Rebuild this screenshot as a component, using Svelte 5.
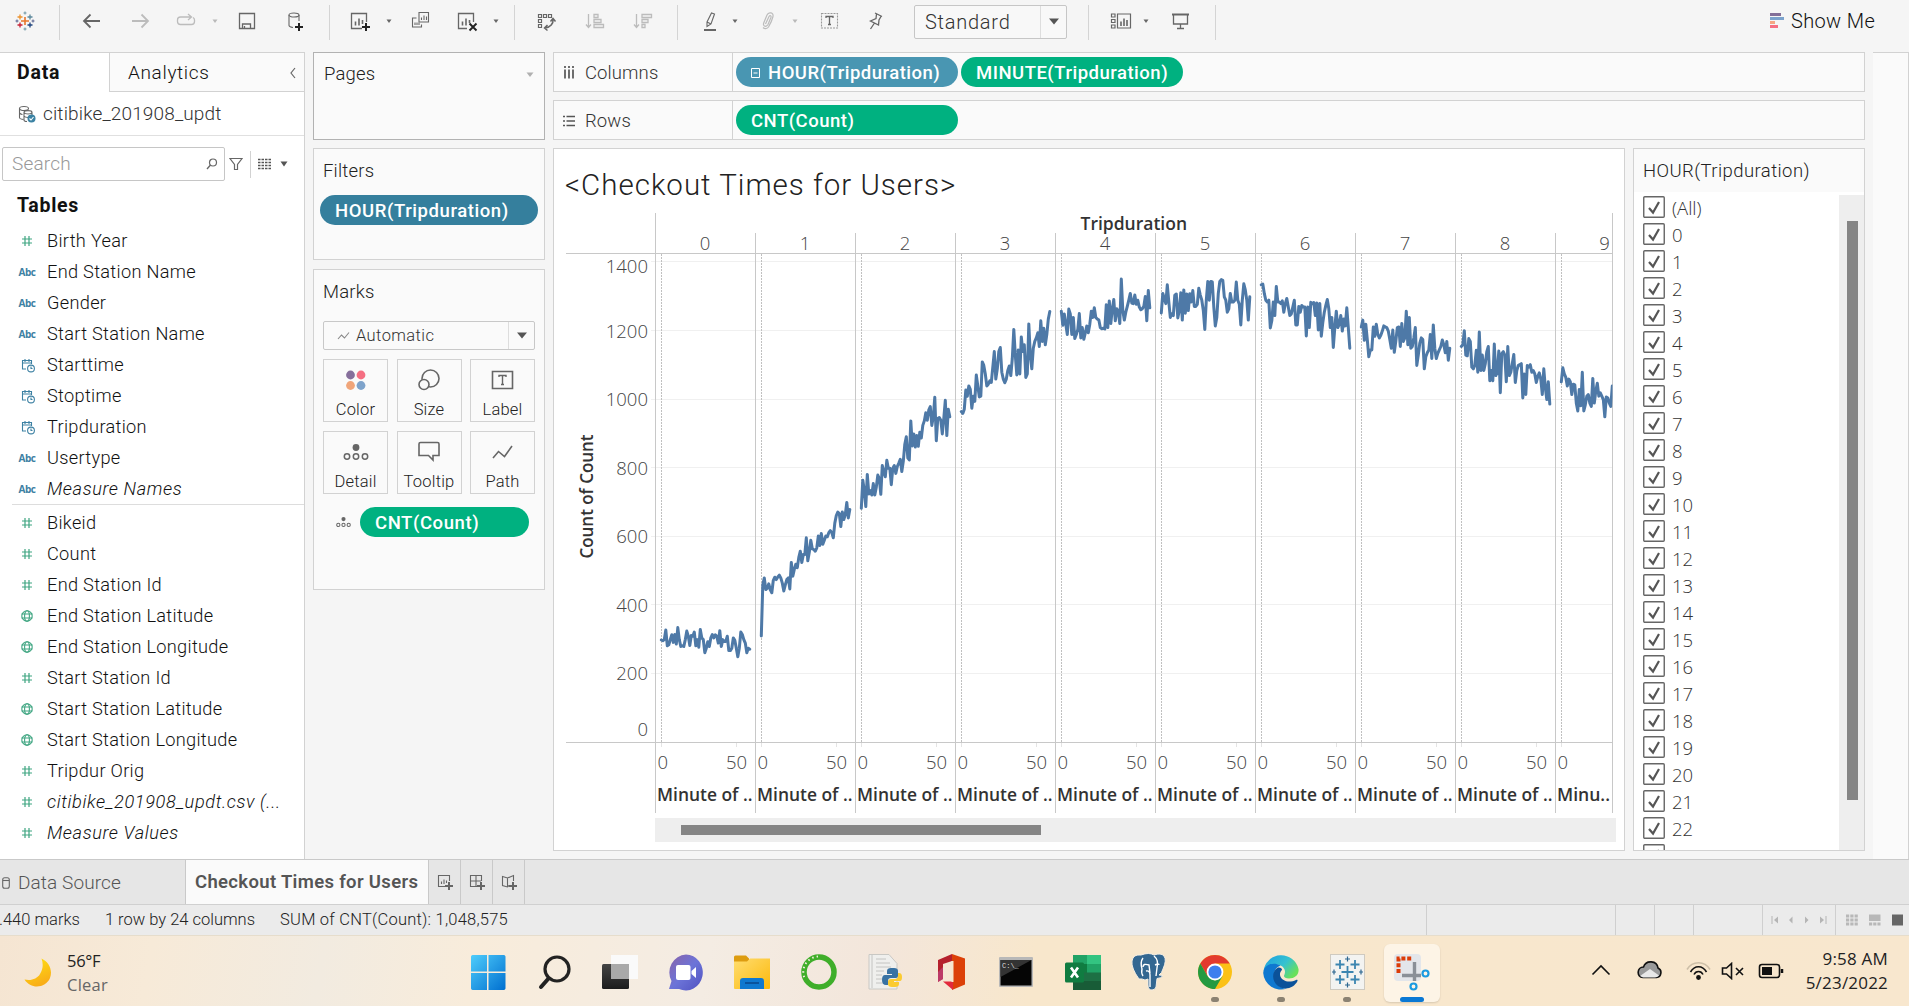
<script>
  const dimensions = [
    ['num', 'Birth Year'], ['abc', 'End Station Name'], ['abc', 'Gender'], ['abc', 'Start Station Name'],
    ['date', 'Starttime'], ['date', 'Stoptime'], ['date', 'Tripduration'], ['abc', 'Usertype'],
    ['abc', 'Measure Names', true],
  ];
  const measures = [
    ['num', 'Bikeid'], ['num', 'Count'], ['num', 'End Station Id'], ['geo', 'End Station Latitude'],
    ['geo', 'End Station Longitude'], ['num', 'Start Station Id'], ['geo', 'Start Station Latitude'],
    ['geo', 'Start Station Longitude'], ['num', 'Tripdur Orig'],
    ['num', 'citibike_201908_updt.csv (...', true], ['num', 'Measure Values', true],
  ];
  const toolbar = [
    'logo', '|', 'back', 'forward', 'replay', 'caretdim', 'save', 'newdata', '|', 'newsheet', 'caret', 'duplicate',
    'clear', 'caret', '|', 'swap', 'asc', 'desc', '|', 'pen', 'caret', 'clip', 'caretdim', 'text', 'pin', 'select',
    '|', 'cards', 'caret', 'present', '|', 'showme',
  ];
  const marks = ['Color', 'Size', 'Label', 'Detail', 'Tooltip', 'Path'];
  const hours = ['(All)', ...Array.from({ length: 23 }, (_, i) => String(i)), ''];
  const apps = ['start', 'search', 'taskview', 'chat', 'explorer', 'anaconda', 'pyfile', 'office', 'cmd', 'excel', 'postgres', 'chrome', 'edge', 'tableau', 'snip'];
  const running = ['chrome', 'edge', 'tableau'];

  // Checkouts per minute, one row for each hour pane
  const series = [
    [299,297,300,328,282,285,300,314,292,315,287,335,300,280,282,280,300,325,310,283,312,310,322,282,300,278,330,305,300,262,275,294,280,305,315,305,314,310,290,326,280,300,295,295,310,268,268,275,305,298,275,250,275,322,315,300,290,262,275,272],
    [311,460,480,446,450,463,445,437,473,482,475,483,488,480,465,442,460,475,480,448,525,485,505,520,510,540,558,525,548,548,597,530,555,590,565,563,558,568,602,575,610,578,590,602,600,612,618,612,597,640,662,672,668,630,672,650,665,700,655,680],
    [683,765,735,688,782,725,735,722,755,722,745,780,770,724,808,790,775,823,800,800,752,800,808,785,805,815,826,790,820,870,892,830,824,938,865,900,862,895,864,905,888,925,938,962,940,970,980,925,950,1007,880,945,948,940,900,945,998,895,972,950],
    [965,960,972,1028,1010,1040,1030,975,1010,995,1072,1040,1008,1010,1110,1100,1075,1040,1045,1055,1050,1095,1140,1060,1090,1140,1152,1080,1060,1049,1060,1085,1098,1070,1120,1205,1130,1072,1145,1075,1183,1140,1160,1065,1075,1221,1130,1090,1150,1170,1180,1195,1155,1230,1170,1208,1160,1190,1235,1257],
    [1258,1217,1250,1220,1190,1264,1250,1190,1240,1178,1190,1205,1251,1180,1210,1176,1195,1215,1195,1220,1258,1240,1268,1240,1235,1233,1210,1207,1208,1206,1277,1210,1288,1222,1265,1292,1230,1265,1258,1222,1352,1260,1232,1255,1272,1290,1310,1282,1280,1305,1278,1290,1270,1262,1265,1272,1301,1230,1318,1268],
    [1253,1310,1295,1280,1335,1285,1240,1250,1245,1305,1308,1238,1260,1312,1232,1320,1252,1308,1260,1309,1285,1318,1272,1272,1278,1325,1305,1290,1260,1205,1290,1345,1290,1345,1343,1270,1215,1240,1310,1345,1350,1348,1300,1290,1255,1265,1310,1285,1285,1290,1343,1290,1278,1218,1290,1338,1320,1290,1232,1300],
    [1335,1337,1310,1290,1285,1290,1209,1230,1285,1245,1330,1285,1285,1280,1288,1255,1280,1295,1270,1245,1250,1270,1290,1218,1218,1272,1255,1275,1270,1270,1186,1270,1210,1284,1280,1283,1245,1282,1203,1280,1185,1225,1255,1275,1292,1265,1210,1240,1152,1210,1258,1210,1220,1245,1200,1235,1215,1268,1210,1150],
    [1212,1232,1173,1220,1175,1125,1145,1145,1212,1185,1220,1190,1180,1188,1200,1215,1212,1210,1200,1175,1150,1203,1138,1170,1210,1212,1155,1222,1170,1180,1258,1160,1240,1150,1155,1180,1210,1100,1130,1165,1180,1175,1090,1125,1137,1145,1190,1120,1218,1150,1120,1135,1145,1155,1174,1160,1137,1170,1115,1150],
    [1155,1160,1201,1130,1128,1178,1170,1095,1090,1100,1144,1080,1197,1085,1130,1085,1105,1140,1155,1055,1085,1055,1162,1070,1080,1142,1020,1135,1140,1130,1052,1155,1070,1080,1105,1132,1050,1085,1100,1102,1105,1005,1075,1015,1100,1095,1102,1080,1085,1075,1050,1068,1078,1060,1015,1090,1035,1000,1052,987],
    [1052,1093,1075,1065,1040,1060,1052,1015,1045,1043,990,967,1030,982,1080,967,985,1010,1015,990,980,1062,990,1025,1048,1010,1020,1010,1000,950,1008,1005,990,980,1040],
  ];
  const Y = (v) => 742.5 - v * 0.34286;
  const points = (row, h) => row.map((v, m) => `${(661.3 + h * 100 + m * 1.5).toFixed(1)},${Y(v).toFixed(1)}`).join(' ');
  const ticks = [1400, 1200, 1000, 800, 600, 400, 200, 0];
  const labelY = (t) => (t === 1400 ? 273 : t === 0 ? 735.5 : Y(t) + 6.5);
</script>

{#snippet icon(n)}
  {#if n === 'logo'}
    <svg width="20" height="22" viewBox="0 0 20 22" class="ln">
      <path d="M10 7v8M6 11h8" stroke="#e8762b" stroke-width="1.6" />
      <path d="M5 4.500v5M2.500 7h5" stroke="#eb912b" stroke-width="1.300" /><path d="M15 4.500v5M12.500 7h5" stroke="#5b879b" stroke-width="1.300" />
      <path d="M5 12.500v5M2.500 15h5" stroke="#c72035" stroke-width="1.300" /><path d="M15 12.500v5M12.500 15h5" stroke="#1f447e" stroke-width="1.300" />
      <path d="M10 1.500v3M8.500 3h3M10 17.500v3M8.500 19h3" stroke="#7199a6" /><path d="M2 9.500v3M.5 11h3M18 9.500v3M16.500 11h3" stroke="#5c6692" />
    </svg>
  {:else if n === 'back'}
    <svg width="20" height="22" viewBox="0 0 20 22" class="ln"><path d="M2 11h16M8.500 4.500L2 11l6.500 6.500" stroke-width="1.800" /></svg>
  {:else if n === 'forward'}
    <svg width="20" height="22" viewBox="0 0 20 22" class="ln dim"><path d="M2 11h16M11.500 4.500L18 11l-6.500 6.500" stroke-width="1.800" /></svg>
  {:else if n === 'replay'}
    <svg width="20" height="22" viewBox="0 0 20 22" class="ln dim"><path d="M5 7h-.5a3 3 0 0 0-3 3v1.500a3 3 0 0 0 3 3h11a3 3 0 0 0 3-3V10a3 3 0 0 0-1.500-2.500M4.500 7H15M12 4l3.500 3L12 10" stroke-width="1.300" /></svg>
  {:else if n === 'caret'}
    <svg width="8" height="22" viewBox="0 0 8 22"><path d="M1.500 9.500h5L4 13z" fill="#666" /></svg>
  {:else if n === 'caretdim'}
    <svg width="8" height="22" viewBox="0 0 8 22"><path d="M1.500 9.500h5L4 13z" fill="#b9b9b9" /></svg>
  {:else if n === 'save'}
    <svg width="20" height="22" viewBox="0 0 20 22" class="ln"><path d="M1.500 3.500h15v15h-15zM4.500 18.500v-4.500h8v4.500M6.500 16v2.500" stroke-width="1.300" /></svg>
  {:else if n === 'newdata'}
    <svg width="20" height="22" viewBox="0 0 20 22" class="ln"><ellipse cx="7" cy="5" rx="5" ry="2" /><path d="M2 5v10.500c0 1 2 1.700 4 2M12 5v6" /><path d="M12 13v8M8 17h8" stroke="#222" stroke-width="2" /></svg>
  {:else if n === 'newsheet'}
    <svg width="22" height="22" viewBox="0 0 22 22" class="ln"><path d="M12 18.500H1.500v-15h15V12" stroke-width="1.300" /><path d="M5.500 11.500v4M9 8.500v7M12.500 10v4" stroke-width="1.600" /><path d="M16 13v8M12 17h8" stroke="#222" stroke-width="2" /></svg>
  {:else if n === 'duplicate'}
    <svg width="20" height="22" viewBox="0 0 20 22" class="ln"><path d="M8 2.500h9.500v9.500H8zM5.500 8H1.500v9h9V14.500" /><path d="M10.500 7.500v2.500M13 5.500v4.500M15.500 6.500v3.500M4 12.500v2.500M6 12.500v2.500M8 12.500v2.500" /></svg>
  {:else if n === 'clear'}
    <svg width="22" height="22" viewBox="0 0 22 22" class="ln"><path d="M10 18.500H1.500v-15h15V12" stroke-width="1.300" /><path d="M5.500 11.500v4M9 8.500v7M12.500 10v3" stroke-width="1.600" /><path d="M12.500 13.500l7 7M19.500 13.500l-7 7" stroke="#222" stroke-width="1.900" /></svg>
  {:else if n === 'swap'}
    <svg width="20" height="22" viewBox="0 0 20 22" class="ln"><path d="M1.500 4.500h3v3h-3zM6.500 4.500h3v3h-3zM11.500 4.500h3v3h-3zM1.500 9.500h3v3h-3zM1.500 14.500h3v3h-3z" stroke-width="1.200" /><path d="M16 9.500c.5 4-2.500 8-8 8.500M13.500 11.500l2.500-3 2.500 3M10.500 15l-3 3 3 2.500" stroke-width="1.500" /></svg>
  {:else if n === 'asc'}
    <svg width="20" height="22" viewBox="0 0 20 22" class="ln dim"><path d="M3.500 4v13M1 14.500l2.500 3 2.500-3M9 4.500h4v3H9zM9 9.500h7v3H9zM9 14.500h9.500v3H9z" stroke-width="1.300" /></svg>
  {:else if n === 'desc'}
    <svg width="20" height="22" viewBox="0 0 20 22" class="ln dim"><path d="M3.500 4v13M1 14.500l2.500 3 2.500-3M9 4.500h9.500v3H9zM9 9.500h6v3H9zM9 14.500h3v3H9z" stroke-width="1.300" /></svg>
  {:else if n === 'pen'}
    <svg width="16" height="22" viewBox="0 0 16 22" class="ln"><path d="M5 12L9.500 3l3 1L9 14l-4 2.500zM5 12l4 2" /><path d="M2 20h12" stroke-width="2" /></svg>
  {:else if n === 'clip'}
    <svg width="16" height="22" viewBox="0 0 16 22" class="ln dim"><path d="M5.500 14L9 6.500c1-1.500 2.500-.8 2 .8L8 14.500c-1.500 3-5.500 2-4.300-1.500L7 5c1.500-3.500 7-2.500 6 1.500-.5 2-3 8-4.500 10.500-1.500 2-4 2-5.500.5" stroke-width="1.200" /></svg>
  {:else if n === 'text'}
    <svg width="20" height="22" viewBox="0 0 20 22" class="ln"><path d="M1.500 3.500h16v14.500h-16z" stroke-dasharray="2 1" stroke="#999" /><path d="M6 8V6.500h7V8M9.500 6.500v8M8 14.500h3" stroke-width="1.300" /></svg>
  {:else if n === 'pin'}
    <svg width="16" height="22" viewBox="0 0 16 22" class="ln"><path d="M7 3l7 3.500M8.500 4L8 8.500 2.500 11l8 4 .5-5L13 6.500M6.500 13l-4 6" stroke-width="1.300" /></svg>
  {:else if n === 'select'}
    <div class="select"><span>Standard</span><i><svg width="10" height="7" viewBox="0 0 10 7"><path d="M0 .5h10L5 6.500z" fill="#555" /></svg></i></div>
  {:else if n === 'cards'}
    <svg width="22" height="22" viewBox="0 0 22 22" class="ln"><path d="M7.500 4h13v14h-13zM1.500 4H5v3H1.500zM1.500 9.500H5v3H1.500zM1.500 15H5v3H1.500z" stroke-width="1.200" /><path d="M11 11.500V16M14 8.500V16M17 10V16" stroke-width="1.600" /></svg>
  {:else if n === 'present'}
    <svg width="20" height="22" viewBox="0 0 20 22" class="ln"><path d="M1 4.500h17" stroke-width="2" /><path d="M2.500 5v9h14V5M9.500 14v4.500M6 18.500h7" stroke-width="1.300" /></svg>
  {:else if n === 'showme'}
    <div class="showme"><svg width="14" height="16" viewBox="0 0 14 16"><path d="M0 0h11v3H0z" fill="#836f98" /><path d="M0 4h14v3H0z" fill="#7ba2cc" /><path d="M0 8h5v3H0z" fill="#f5a684" /><path d="M0 12h8v3H0z" fill="#f56f82" /></svg><span>Show Me</span></div>
  {:else if n === 'num'}
    <svg width="16" height="14" viewBox="0 0 16 14" class="ln green"><path d="M6 2v10M10 2v10M3 5h10M3 9h10" stroke-width="1.200" /></svg>
  {:else if n === 'abc'}
    <b class="abc">Abc</b>
  {:else if n === 'date'}
    <svg width="16" height="16" viewBox="0 0 16 16" class="ln blue"><path d="M7 12H3.500V3.500h9V7M3.500 6h9M6 2v3M10 2v3" /><circle cx="12" cy="11.500" r="3.400" /><path d="M12 9.500v2h1.500" /></svg>
  {:else if n === 'geo'}
    <svg width="16" height="14" viewBox="0 0 16 14" class="ln green"><circle cx="8" cy="7" r="5.200" /><ellipse cx="8" cy="7" rx="2.400" ry="5.200" /><path d="M2.500 5h11M2.500 9h11" /></svg>
  {:else if n === 'Color'}
    <svg width="24" height="22" viewBox="0 0 24 22"><circle cx="6.500" cy="6" r="4.400" fill="#866f9b" /><circle cx="17" cy="6" r="4.400" fill="#f56f82" /><circle cx="6.500" cy="16.500" r="4.400" fill="#f0a57a" /><circle cx="17" cy="16.500" r="4.400" fill="#7ea3cb" /></svg>
  {:else if n === 'Size'}
    <svg width="24" height="22" viewBox="0 0 24 22" class="ln"><circle cx="13.500" cy="9.500" r="8.500" stroke-width="1.600" /><circle cx="7" cy="15.500" r="5" fill="#fafafa" stroke-width="1.600" /></svg>
  {:else if n === 'Label'}
    <svg width="24" height="22" viewBox="0 0 24 22" class="ln"><path d="M1.500 2.500h20v17h-20z" stroke-width="1.600" /><path d="M8 8V6.500h7V8M11.500 6.500v9M10 15.500h3" stroke-width="1.400" /></svg>
  {:else if n === 'Detail'}
    <svg width="26" height="22" viewBox="0 0 26 22" class="ln"><circle cx="13" cy="6.500" r="3.400" fill="#666" stroke="none" /><circle cx="4" cy="15.500" r="2.700" stroke-width="1.500" /><circle cx="13" cy="15.500" r="2.700" stroke-width="1.500" /><circle cx="22" cy="15.500" r="2.700" stroke-width="1.500" /></svg>
  {:else if n === 'Tooltip'}
    <svg width="24" height="22" viewBox="0 0 24 22" class="ln"><path d="M3.500 1.500h17a1.500 1.500 0 0 1 1.500 1.500v11.500h-6v4.500l-4.500-4.500H2V3a1.500 1.500 0 0 1 1.500-1.500z" stroke-width="1.600" /></svg>
  {:else if n === 'Path'}
    <svg width="24" height="22" viewBox="0 0 24 22" class="ln"><path d="M2 17L7.500 10.500l6 5L21 5" stroke-width="1.600" /></svg>
  {/if}
{/snippet}

{#snippet app(n)}
  <svg width="38" height="38" viewBox="0 0 38 38">
    {#if n === 'start'}
      <path d="M2 3.500a2 2 0 0 1 1.500-1.500H18v16.500H2zM19.500 2H35a2 2 0 0 1 1.500 1.500v15h-17zM2 20h16v17H3.500A2 2 0 0 1 2 35.500zM19.500 20h17v15.500A2 2 0 0 1 35 37H19.500z" fill="url(#win)" />
    {:else if n === 'search'}
      <circle cx="22" cy="16" r="12" fill="none" stroke="#222" stroke-width="3.200" /><path d="M13.500 25.500L6 34" stroke="#222" stroke-width="4" stroke-linecap="round" />
    {:else if n === 'taskview'}
      <rect x="1" y="11" width="27" height="25" rx="1.500" fill="url(#dark)" /><path d="M10 11h18v15H10z" fill="#a9a9a9" /><path d="M28 2h9v24h-9zM10 2h18v9H10z" fill="#fafafa" />
    {:else if n === 'chat'}
      <path d="M19 1.500a17 18 0 1 1-7 34.500H2l2.500-8A18 18 0 0 1 19 1.500z" fill="url(#chat)" /><rect x="9" y="12" width="14.500" height="15" rx="2" fill="#fff" /><path d="M24.500 18l4.500-4v11l-4.500-4z" fill="#fff" />
    {:else if n === 'explorer'}
      <path d="M1 4a1.500 1.500 0 0 1 1.500-1.500H13L16 5.500V12H1z" fill="#dd9c10" /><path d="M1 8.500h13l3-3h20V35a1 1 0 0 1-1 1H2a1 1 0 0 1-1-1z" fill="url(#folder)" /><path d="M7 36V28a3 3 0 0 1 3-3h18a3 3 0 0 1 3 3v8z" fill="#0f78cf" /><path d="M12 30h14" stroke="#0a539c" stroke-width="2" />
    {:else if n === 'anaconda'}
      <circle cx="19" cy="19" r="15" fill="none" stroke="#3fae2a" stroke-width="5.500" /><path d="M18 3.500A15.500 15.500 0 0 0 4.500 25" fill="none" stroke="#f4ecdf" stroke-width="2" stroke-dasharray="1.500 3" />
    {:else if n === 'pyfile'}
      <path d="M3 1.500h20l8 9V36H3z" fill="#efefed" stroke="#c9c8c4" /><path d="M6 2v33M10 6h10M10 10h14M10 14h15M10 18h8M10 22h6M10 26h7M10 30h8" stroke="#c4c4c2" /><path d="M25 15q-4 0-4 3v3h5v1h-7q-3 0-3 5t4 5h2v-4q0-3 3-3h5q2 0 2-2v-5q0-3-4-3z" fill="#3872a3" /><path d="M29 34q4 0 4-3v-2h-5v-1h6q2 0 2-4t-3-4h-1v3q0 3-3 3h-4q-3 0-3 3v2q0 3 4 3z" fill="#fbcb31" />
    {:else if n === 'office'}
      <path d="M20 1L6 7v22l5-3V11l9-3z" fill="#b5202c" /><path d="M6 29l5-3V14l-5 5z" fill="#c24c90" opacity=".6" /><path d="M20 1l13 4.500v26L20 37z" fill="#dc4008" /><path d="M11 28.500h10V37z" fill="#e22a3c" /><path d="M20.500 8v21" stroke="#f7e6cd" stroke-width="2" />
    {:else if n === 'cmd'}
      <rect x="1" y="4" width="34" height="30" rx="1" fill="#b8b8b8" /><rect x="2.500" y="7" width="31" height="25.500" fill="#050505" /><path d="M2.500 7h31L2.500 24z" fill="#333" /><text x="4" y="15" font-size="7" fill="#ddd" font-family="Liberation Mono, monospace">C:\_</text>
    {:else if n === 'excel'}
      <rect x="9" y="2" width="28" height="35" rx="1.500" fill="#1d7044" /><path d="M9 2h14v9H9z" fill="#21a366" /><path d="M23 2h14v9H23z" fill="#33c481" /><path d="M9 11h14v8.500H9z" fill="#107c41" /><path d="M23 11h14v8.500H23z" fill="#21a366" /><path d="M9 28h28v9H9z" fill="#185c37" /><rect x="1" y="9.500" width="19" height="20" rx="1.500" fill="#107c41" /><path d="M7 14.500l7 10M14 14.500l-7 10" stroke="#fff" stroke-width="2.600" />
    {:else if n === 'postgres'}
      <path d="M11 2q8-3 13 0 7-2.500 10 1 3 4-1 13-1 4-4 6l4 .5q-2 3-6 3L26 34q-1 3-4 3-4 0-4-5v-6q-3 2-6 0l-3 0Q1 15 2 8q1-7 9-6z" fill="#336791" stroke="#f4eee4" /><path d="M24 3q5 4 3 12l-1 8M13 5q-3 4-1 11-1 4 1 7M16 18q4-1 4 4v12M13 14q0-4 6-2l1 8M25 12q4-2 4 0" fill="none" stroke="#fff" stroke-width="1.400" />
    {:else if n === 'chrome'}
      <circle cx="19" cy="19" r="17" fill="#fbc116" /><path d="M4.300 10.500A17 17 0 0 1 33.700 10.500H19L11.600 23.300z" fill="#e33b2e" /><path d="M4.300 10.500A17 17 0 0 0 19 36l7.400-12.700-7.400 4.200-7.400-4.200z" fill="#249a41" /><circle cx="19" cy="19" r="8.400" fill="#fff" /><circle cx="19" cy="19" r="6.600" fill="#3d7fee" />
    {:else if n === 'edge'}
      <path d="M1.500 18A17.800 17.800 0 0 1 36.500 16c.8 6-4 9.500-9.500 9.500-4 0-6-1.500-4.500-4C25 15 18 10 11 12c-5 1.500-8 4-9.500 6z" fill="url(#edge)" /><path d="M1.200 20C2 11 12 8.500 18.500 12.500c-6 2-8 9-5 15C16 33 20 36 25 35.500A17.800 17.800 0 0 1 1.200 20z" fill="#0f78d0" /><path d="M16 14.500c-7 4-6 14 0 18.500 7 5 16 2 19.500-5 .3-1-.5-1.500-1.500-1-7 3.500-15 1-16-5-.3-2.500 1-4 2-5 .5-1.500-2-3-4-2.500z" fill="#0b529a" />
    {:else if n === 'tableau'}
      <rect x="2.500" y="1.500" width="34" height="35" fill="#f3f3f1" stroke="#cfcac0" /><path d="M19.500 13v12M13.500 19h12M12 7v9M7.500 11.500h9M27 7v9M22.500 11.500h9M12 22v9M7.500 26.500h9M27 22v9M22.500 26.500h9" stroke="#3c85b0" stroke-width="1.800" /><path d="M19.500 3.500v5M17 6h5M19.500 29.500v5M17 32h5M6 16.500v5M4 19h4M33 16.500v5M31 19h4" stroke="#2c6690" stroke-width="1.200" />
    {:else if n === 'snip'}
      <rect x="1" y="1" width="27" height="27" rx="4" fill="#e3e6ea" /><path d="M5.500 20V5.500H20" stroke="#dc3b06" stroke-width="4" fill="none" stroke-dasharray="4 1.800" /><path d="M9 22.500h19M21.500 9v19" stroke="#8a9097" stroke-width="3.400" fill="none" /><circle cx="32.500" cy="20.500" r="3" fill="none" stroke="#1c9be0" stroke-width="2.200" /><circle cx="20.500" cy="33.500" r="3" fill="none" stroke="#1c9be0" stroke-width="2.200" />
    {/if}
  </svg>
{/snippet}

<svg width="0" height="0" class="defs" aria-hidden="true">
  <defs>
    <linearGradient id="win" x1="0" y1="0" x2="1" y2="1"><stop offset="0" stop-color="#4fcdfb" /><stop offset="1" stop-color="#006fd0" /></linearGradient>
    <linearGradient id="dark" x1="0" y1="0" x2="0" y2="1"><stop offset="0" stop-color="#444" /><stop offset="1" stop-color="#1c1c1c" /></linearGradient>
    <linearGradient id="chat" x1="0" y1="0" x2="1" y2="1"><stop offset="0" stop-color="#8a62a8" /><stop offset=".5" stop-color="#6c74d8" /><stop offset="1" stop-color="#5051c0" /></linearGradient>
    <linearGradient id="folder" x1="0" y1="0" x2="1" y2="1"><stop offset="0" stop-color="#ffdd70" /><stop offset="1" stop-color="#fcb90c" /></linearGradient>
    <linearGradient id="edge" x1="0" y1="0" x2="1" y2=".6"><stop offset="0" stop-color="#1b9de2" /><stop offset=".6" stop-color="#36c2d0" /><stop offset="1" stop-color="#69e05a" /></linearGradient>
    <linearGradient id="moon" x1="0" y1="0" x2=".4" y2="1"><stop offset="0" stop-color="#ffe411" /><stop offset="1" stop-color="#f9ae18" /></linearGradient>
  </defs>
</svg>

<div class="screen">
  <header class="toolbar">
    {#each toolbar as t}
      {#if t === '|'}<span class="rule"></span>{:else}<span class="tool">{@render icon(t)}</span>{/if}
    {/each}
  </header>

  <main>
    <aside class="data">
      <div class="tabs">
        <strong>Data</strong>
        <div class="analytics"><span>Analytics</span><svg width="8" height="14" viewBox="0 0 8 14" class="ln"><path d="M6 2L2 7l4 5" stroke-width="1.200" /></svg></div>
      </div>
      <div class="source">
        <svg width="18" height="18" viewBox="0 0 18 18" class="ln"><ellipse cx="6" cy="3.500" rx="4.500" ry="2" /><path d="M1.500 3.500v9c0 1 2 2 4 2M1.500 8c1 1 2 1.500 3 1.500" /><path d="M6 7.500c0-2.500 8-2.500 8 0v3M6 7.500v7.500c0 1 2 1.500 3 1.500M6 7.500c1 2 7 2 8 0M6 11c1 1.500 3 1.500 4 1.500" /><circle cx="13.500" cy="13.500" r="4" fill="#3b82a3" stroke="none" /><path d="M11.500 13.500l1.500 1.500 2.500-3" stroke="#fff" /></svg>
        <span>citibike_201908_updt</span>
      </div>
      <div class="find">
        <div class="search"><span>Search</span><svg width="12" height="12" viewBox="0 0 12 12" class="ln"><circle cx="7" cy="4.500" r="3.500" stroke-width="1.200" /><path d="M4.500 7L1 11" stroke-width="1.400" /></svg></div>
        <svg width="14" height="14" viewBox="0 0 14 14" class="ln"><path d="M1 1.500h12L8.500 7.500v5h-3v-5z" stroke-width="1.200" /></svg>
        <span class="bar"></span>
        <svg width="13" height="12" viewBox="0 0 13 12"><path d="M0 1.500h13M0 4.500h13M0 7.500h13M0 10.500h13" stroke="#555" stroke-width="1.500" stroke-dasharray="2.500 1" /></svg>
        <svg class="dd" width="8" height="6" viewBox="0 0 8 6"><path d="M.5 .5h7L4 5.500z" fill="#555" /></svg>
      </div>
      <h2>Tables</h2>
      <ul>
        {#each dimensions as [t, name, it]}<li><span class="ty">{@render icon(t)}</span><span class:it>{name}</span></li>{/each}
      </ul>
      <ul class="measures">
        {#each measures as [t, name, it]}<li><span class="ty">{@render icon(t)}</span><span class:it>{name}</span></li>{/each}
      </ul>
    </aside>

    <section class="shelves">
      <div class="card pages"><h3>Pages</h3><svg width="8" height="6" viewBox="0 0 8 6"><path d="M.5 .5h7L4 5z" fill="#b0b0b0" /></svg></div>
      <div class="card filters"><h3>Filters</h3><div class="pill deep">HOUR(Tripduration)</div></div>
      <div class="card marks">
        <h3>Marks</h3>
        <div class="auto"><svg width="14" height="10" viewBox="0 0 14 10" class="ln"><path d="M1 8l3.500-4 3 3L12 1.500" stroke="#888" /></svg><span>Automatic</span><i><svg width="10" height="7" viewBox="0 0 10 7"><path d="M0 .5h10L5 6.500z" fill="#555" /></svg></i></div>
        <div class="tiles">
          {#each marks as m}<div class="tile">{@render icon(m)}<span>{m}</span></div>{/each}
        </div>
        <div class="enc"><svg width="15" height="12" viewBox="0 0 26 20" class="ln"><circle cx="13" cy="5" r="3.600" fill="#666" stroke="none" /><circle cx="4" cy="15" r="2.800" stroke-width="1.800" /><circle cx="13" cy="15" r="2.800" stroke-width="1.800" /><circle cx="22" cy="15" r="2.800" stroke-width="1.800" /></svg><div class="pill green-p">CNT(Count)</div></div>
      </div>
    </section>

    <section class="work">
      <div class="shelf">
        <div class="name"><svg width="12" height="13" viewBox="0 0 12 13"><path d="M2 0v2M2 3.500V12.500M6 0v2M6 3.500V12.500M10 0v2M10 3.500V12.500" stroke="#555" stroke-width="1.700" /></svg><span>Columns</span></div>
        <div class="pill hour"><svg width="9" height="10" viewBox="0 0 9 10"><path d="M.5 .5h8v9h-8zM2.500 5h4" fill="none" stroke="#fff" /></svg>HOUR(Tripduration)</div>
        <div class="pill green-p">MINUTE(Tripduration)</div>
      </div>
      <div class="shelf">
        <div class="name"><svg width="12" height="12" viewBox="0 0 12 12"><path d="M0 1.500h2M3.500 1.500H12M0 6h2M3.500 6H12M0 10.500h2M3.500 10.500H12" stroke="#555" stroke-width="1.700" /></svg><span>Rows</span></div>
        <div class="pill green-p">CNT(Count)</div>
      </div>
      <div class="lower">
        <div class="view">
          <h1>&lt;Checkout Times for Users&gt;</h1>
          <svg class="chart" width="1058" height="602" viewBox="558 212 1058 602">
            <defs><clipPath id="pane"><rect x="655" y="212" width="957.500" height="602" /></clipPath></defs>
            {#each ticks as t}
              {#if t}<path d="M651 {Math.round(Y(t)) - 0.5}H1612" stroke="#f0f0f0" />{/if}
              <text class="num" x="648" y={labelY(t)} text-anchor="end">{t}</text>
            {/each}
            <path d="M566 253.500H1612M566 742.500H1612M655.500 213V813M1612.500 213V813" stroke="#c8c8c8" />
            <text class="strong" x="1080.500" y="229.500" textLength="106.500" lengthAdjust="spacingAndGlyphs">Tripduration</text>
            <text class="strong" transform="translate(592.500 558.500) rotate(-90)" textLength="124" lengthAdjust="spacingAndGlyphs">Count of Count</text>
            {#each series as row, h}
              {@const x = 655.5 + h * 100}
              {#if h}<path d="M{x} 233V813" stroke="#c8c8c8" />{/if}
              <path d="M{x + 6} 254V742" stroke="#c0c0c0" stroke-dasharray="2 1" />
              <path d="M{x + 6} 743V747" stroke="#e4e4e4" />
              <text class="num" x={h === 9 ? 1604.5 : x + 49.5} y="250" text-anchor="middle">{h}</text>
              <text class="num" x={x + 2} y="768.500">0</text>
              {#if h < 9}
                <path d="M{x + 81} 743V747" stroke="#e4e4e4" />
                <text class="num" x={x + 91.5} y="768.500" text-anchor="end">50</text>
                <text class="strong" x={x + 1.5} y="800.500" textLength="95.500" lengthAdjust="spacingAndGlyphs">Minute of ..</text>
              {:else}
                <text class="strong" x={x + 1.5} y="800.500" textLength="53" lengthAdjust="spacingAndGlyphs">Minu..</text>
              {/if}
              <polyline points={points(row, h)} clip-path="url(#pane)" />
            {/each}
          </svg>
          <div class="hscroll"><i></i></div>
        </div>
        <div class="quick">
          <h3>HOUR(Tripduration)</h3>
          <div class="body">
            <div class="opts">
              {#each hours as h}
                <label><svg width="22" height="22" viewBox="0 0 22 22"><rect x=".75" y=".75" width="20.500" height="20.500" rx="1" fill="#fff" stroke="#666" stroke-width="1.400" /><path d="M6 12l4 4.500L16 6" fill="none" stroke="#555" stroke-width="2.200" /></svg><span>{h}</span></label>
              {/each}
            </div>
            <div class="vscroll"><i></i></div>
          </div>
        </div>
      </div>
    </section>
    <div class="edgepane"></div>
  </main>

  <nav class="sheets">
    <div class="ds"><svg width="8" height="12" viewBox="0 0 8 12" class="ln"><rect x=".7" y=".7" width="6.600" height="10.500" rx="2" /><path d="M1 3.500h6" /></svg><span>Data Source</span></div>
    <div class="active">Checkout Times for Users</div>
    <div class="new"><svg width="17" height="17" viewBox="0 0 17 17" class="ln"><path d="M8 12.500H1.500v-11h11V7" /><path d="M4.500 7.500v2.500M7 5.500V10M9.500 6.500V9" /><path d="M12 8v8M8 12h8" stroke-width="2" /></svg></div>
    <div class="new"><svg width="17" height="17" viewBox="0 0 17 17" class="ln"><path d="M8 12.500H1.500v-11h11V7M1.500 7H12M7 1.500v11" /><path d="M12 8v8M8 12h8" stroke-width="2" /></svg></div>
    <div class="new"><svg width="17" height="17" viewBox="0 0 17 17" class="ln"><path d="M8 11.500L6.500 13 1.500 11.500v-9L6.500 4 12.500 1.500V7M6.500 4v9" /><path d="M12 8v8M8 12h8" stroke-width="2" /></svg></div>
  </nav>

  <div class="status">
    <div class="facts"><span>.440 marks</span><span>1 row by 24 columns</span><span class="sum">SUM of CNT(Count): 1,048,575</span></div>
    <i class="s1"></i><i class="s2"></i><i class="s2"></i><i class="s3"></i>
    <div class="pager"><svg width="56" height="10" viewBox="0 0 56 10"><path d="M1 1v8M55 1v8" stroke="#b5b5b5" /><path d="M7 1.500v7L3 5zM21.500 1.500v7L18 5zM34 1.500v7L37.500 5zM49 1.500v7L53 5z" fill="#b5b5b5" /></svg></div>
    <div class="modes"><svg width="57" height="12" viewBox="0 0 57 12"><path d="M0 2h12M0 6h12M0 10h12" stroke="#b8b8b8" stroke-width="3" stroke-dasharray="3.200 1.100" /><path d="M23 .5h11.500V7H23z" fill="#b8b8b8" /><path d="M23 10h11.500" stroke="#b8b8b8" stroke-width="3" stroke-dasharray="3.200 1" /><path d="M46 .5h11v11H46z" fill="#666" /></svg></div>
  </div>

  <footer>
    <div class="weather">
      <svg width="30" height="32" viewBox="0 0 30 32"><path d="M18.500 1.500C26 5 30 13 27 21 23 31 8 33 1.500 22.500 8 24 14 22 17 17c3-5 3.500-10 1.500-15.500z" fill="url(#moon)" /></svg>
      <div><span>56°F</span><small>Clear</small></div>
    </div>
    <div class="apps">
      {#each apps as a}<div class="app" class:cur={a === 'snip'}>{@render app(a)}{#if running.includes(a)}<i></i>{/if}{#if a === 'snip'}<i class="on"></i>{/if}</div>{/each}
    </div>
    <div class="tray">
      <svg width="20" height="12" viewBox="0 0 20 12" class="tr"><path d="M1.500 10.500L10 2l8.500 8.500" /></svg>
      <svg width="26" height="18" viewBox="0 0 26 18" class="tr"><path d="M6 16.500h13.500a5 5 0 0 0 1.500-9.500C20 -.5 9-1.500 6.500 6 0 6-1 16 6 16.500z" fill="#999" /><path d="M3 15l10-7 9 6.500q-2 2-4 2H6z" fill="#e8e8e8" stroke="none" /></svg>
      <svg width="25" height="20" viewBox="0 0 25 20" class="tr"><path d="M1 8.500C6.500-.5 18.500-.5 24 8.500" stroke="#cdbfa8" /><path d="M4.500 11C8.500 4 16.500 4 20.500 11M8 13.500c2-4 7-4 9 0" /><circle cx="12.500" cy="16.500" r="1.600" fill="#111" /></svg>
      <svg width="24" height="18" viewBox="0 0 24 18" class="tr"><path d="M1.500 6h4l5-4.500v15l-5-4.500h-4zM15 6l7 7M22 6l-7 7" /></svg>
      <svg width="26" height="16" viewBox="0 0 26 16" class="tr"><rect x="1.500" y="1.500" width="20" height="13" rx="2.500" /><rect x="4" y="4" width="10" height="8" fill="#111" stroke="none" /><path d="M24 6v4" stroke-width="2.500" /></svg>
    </div>
    <div class="clock"><span>9:58 AM</span><span>5/23/2022</span></div>
  </footer>
</div>

<style>
  :global(body) { background: #f5f5f5; overflow: hidden; }
  * { box-sizing: border-box; }
  h1, h2, h3, ul { margin: 0; padding: 0; font-weight: 300; }
  svg { display: block; flex: none; }
  .defs { position: absolute; }
  .screen { width: 1909px; height: 1006px; display: flex; flex-direction: column; overflow: hidden; background: #f5f5f5; color: #333; font: 300 19px/24px Roboto, sans-serif; white-space: nowrap; }
  .ln { fill: none; stroke: #666; stroke-width: 1.1; }
  .ln.dim { stroke: #bcbcbc; }
  .ln.green { stroke: #3fa581; }
  .ln.blue { stroke: #3d81a3; }

  .toolbar { height: 52px; flex: none; padding: 5px 0 0 15px; display: grid; align-items: start; justify-items: start;
    grid-template-columns: 44px 23px 48px 46px 35px 27px 49px 42px 21px 35px 26px 46px 35px 22px 23px 48px 48px 44px 25px 29px 29px 31px 29px 48px 46px 174px 22px 32px 29px 44px 555px auto; }
  .rule { width: 1px; height: 35px; background: #d4d4d4; }
  .tool { height: 33px; display: flex; align-items: center; }
  .tool > :global(svg) { margin-top: -1px; }
  .select { width: 153px; height: 34px; border: 1px solid #c6c6c6; border-radius: 2px; background: #f8f8f8; display: flex; align-items: center; justify-content: space-between; padding-left: 10px; font-size: 20px; letter-spacing: .75px; }
  .select i { width: 26px; height: 32px; border-left: 1px solid #ddd; display: grid; place-items: center; }
  .showme { display: flex; gap: 7px; align-items: center; font-size: 20px; color: #111; letter-spacing: .35px; }
  .showme svg { margin-top: -1px; }
  .showme span { margin-top: -2px; }

  main { height: 807px; flex: none; display: flex; }
  .data { width: 305px; background: #fff; border-right: 1px solid #d2d2d2; color: #111; flex: none; }
  .tabs { display: flex; height: 40px; border-top: 1px solid #d2d2d2; }
  .tabs strong { width: 109px; padding: 8px 0 0 17px; font-weight: 700; font-size: 19.500px; letter-spacing: .8px; }
  .analytics { flex: 1; border: solid #d2d2d2; border-width: 0 0 1px 1px; background: #fafafa; display: flex; align-items: center; justify-content: space-between; padding: 1px 7px 0 18px; letter-spacing: .65px; }
  .source { height: 44px; border-bottom: 1px solid #e0e0e0; display: flex; align-items: center; gap: 7px; padding-left: 18px; color: #333; letter-spacing: .15px; }
  .find { display: flex; align-items: center; height: 34px; margin: 11px 0 0 2px; }
  .search { width: 223px; height: 34px; border: 1px solid #c6c6c6; border-radius: 2px; display: flex; align-items: center; justify-content: space-between; padding: 0 6px 0 9px; color: #999; margin-right: 4px; letter-spacing: .2px; }
  .bar { width: 1px; height: 27px; background: #d2d2d2; margin: 0 7px 0 7px; }
  .dd { margin-left: 9px; }
  h2 { font-weight: 700; font-size: 19.500px; padding: 13px 0 7px 17px; letter-spacing: .7px; }
  ul { list-style: none; }
  ul li { height: 31px; display: flex; align-items: center; font-size: 18.200px; letter-spacing: .3px; font-weight: 300; }
  .ty { width: 47px; padding-left: 18.500px; display: flex; }
  .abc { font: 700 10px/12px "Open Sans", sans-serif; color: #3d81a3; letter-spacing: -.5px; }
  .it { font-style: italic; letter-spacing: .6px; }
  .measures { margin-left: 12px; border-top: 1px solid #ddd; padding-top: 2px; }
  .measures li { margin-left: -12px; }

  .shelves { width: 232px; margin: 0 8px 0 8px; display: flex; flex-direction: column; gap: 9px; flex: none; }
  .card { border: 1px solid #d2d2d2; background: #fafafa; }
  h3 { font-size: 18.500px; line-height: 24px; color: #222; letter-spacing: .2px; }
  .card h3 { padding-left: 10px; }
  .pages { height: 88px; border-color: #b2b2b2; display: flex; justify-content: space-between; padding: 9px 10px 0 0; }
  .pages svg { margin-top: 10px; }
  .filters { height: 112px; padding: 10px 6px 0; margin-top: -1px; }
  .filters h3 { padding-left: 3px; margin-bottom: 12px; }
  .marks { height: 321px; padding: 10px 9px 0; }
  .marks h3 { padding-left: 0; }
  .pill { height: 30px; border-radius: 15px; color: #fff; font-size: 18.500px; font-weight: 500; padding: 1px 15px 0; display: flex; align-items: center; letter-spacing: .58px; }
  .deep { background: #357f9d; }
  .green-p { background: #00b180; }
  .hour { background: #4996b2; gap: 8px; }
  .auto { margin-top: 17px; height: 29px; border: 1px solid #c8c8c8; border-radius: 2px; display: flex; align-items: center; padding-left: 13px; gap: 5px; font-size: 16.500px; color: #333; letter-spacing: .4px; }
  .auto i { margin-left: auto; width: 26px; height: 27px; border-left: 1px solid #ddd; display: grid; place-items: center; }
  .tiles { margin-top: 9px; display: grid; grid-template-columns: repeat(3, 65px); gap: 9px 8.500px; }
  .tile { height: 63px; border: 1px solid #d2d2d2; display: flex; flex-direction: column; align-items: center; padding-top: 9px; gap: 8px; font-size: 16.500px; color: #222; letter-spacing: .2px; }
  .tile span { line-height: 22px; }
  .enc { margin-top: 13px; padding-left: 13px; display: flex; align-items: center; gap: 9px; }
  .enc .pill { width: 169px; }

  .work { width: 1312px; flex: none; }
  .shelf { height: 40px; border: 1px solid #d2d2d2; background: #fafafa; display: flex; align-items: center; gap: 3px; margin-bottom: 8px; }
  .shelf .pill { width: 222px; letter-spacing: .5px; }
  .name { width: 179px; height: 38px; border-right: 1px solid #d2d2d2; display: flex; align-items: center; gap: 10px; padding-left: 9px; font-size: 18.500px; padding-top: 1px; letter-spacing: .1px; }
  .lower { display: flex; gap: 8px; height: 703px; }
  .view { width: 1072px; border: 1px solid #d2d2d2; background: #fff; padding-left: 4px; }
  h1 { font-size: 29.500px; line-height: 40px; padding: 16px 0 7px 7px; letter-spacing: 1px; color: #222; }
  .chart { font-family: "Open Sans", sans-serif; }
  .num { font-size: 18.500px; font-weight: 300; fill: #444; }
  .strong { font-size: 18px; font-weight: 600; fill: #333; }
  polyline { fill: none; stroke: #4e79a7; stroke-width: 3; stroke-linejoin: round; stroke-linecap: round; }
  .hscroll { margin: 4px 0 0 97px; width: 961px; height: 24px; background: #eee; padding: 7px 0 0 26px; }
  .hscroll i { display: block; width: 360px; height: 10px; background: #858585; }
  .quick { width: 232px; border: 1px solid #d2d2d2; background: #fff; display: flex; flex-direction: column; }
  .quick h3 { height: 43px; padding: 10px 0 0 9px; background: #fafafa; letter-spacing: .42px; flex: none; }
  .body { display: flex; justify-content: space-between; height: 658px; }
  .opts { overflow: hidden; padding: 4px 0 0 9px; flex: 1; }
  .opts label { display: flex; align-items: center; gap: 7px; height: 22px; margin-bottom: 5px; font: 300 18.500px/22px "Open Sans", sans-serif; color: #333; }
  .opts span { padding-top: 1px; }
  .vscroll { width: 25px; margin-top: 3px; background: #eee; padding: 26px 0 0 8px; }
  .vscroll i { display: block; width: 11px; height: 579px; background: #858585; }
  .edgepane { margin-left: 8px; flex: 1; background: #fafafa; border: solid #d2d2d2; border-width: 1px 1px 0 0; }

  .sheets { height: 45px; flex: none; background: #e6e6e6; border-top: 1px solid #c9c9c9; display: flex; color: #555; }
  .ds { width: 185px; display: flex; align-items: center; gap: 8px; padding-left: 2px; letter-spacing: .1px; padding-top: 1px; }
  .active { width: 244px; background: #fafafa; border: solid #c9c9c9; border-width: 0 1px; padding: 10px 0 0 9px; font-weight: 600; font-size: 18.500px; letter-spacing: .33px; }
  .new { width: 32px; border-right: 1px solid #c9c9c9; display: grid; place-items: center; padding-left: 2px; }
  .status { height: 32px; flex: none; background: #ebebeb; border-top: 1px solid #d0d0d0; border-bottom: 1px solid #e6ddcc; display: flex; color: #222; font-size: 16.500px; }
  .facts { width: 1426px; display: flex; gap: 25px; line-height: 30px; }
  .facts span:first-child { margin-left: -1px; }
  .sum { letter-spacing: .22px; }
  .status > i { border-left: 1px solid #cfcfcf; }
  .s1 { width: 189px; } .s2 { width: 39px; } .s3 { width: 69px; }
  .pager, .modes { border-left: 1px solid #cfcfcf; display: flex; align-items: center; }
  .pager { width: 73px; padding-left: 8px; }
  .modes { padding-left: 10px; }

  footer { flex: 1; display: flex; background: linear-gradient(100deg, #f5e5d2 0%, #f7ead8 8%, #f2ebe0 17%, #f8ecdb 25%, #f4ece3 37%, #f3e6db 46%, #f8e7cc 54%, #f8e7ce 100%); font-family: "Open Sans", sans-serif; font-weight: 400; font-size: 17px; color: #222; }
  .weather { width: 455px; display: flex; padding: 21px 0 0 23px; gap: 14px; }
  .weather div { display: flex; flex-direction: column; margin-top: -8px; }
  .weather span, .weather small { font-size: 16.500px; line-height: 24px; }
  .weather span { letter-spacing: -.3px; }
  .weather small { color: #666; letter-spacing: .25px; }
  .apps { display: flex; width: 993px; }
  .app { width: 66.100px; display: flex; flex-direction: column; align-items: center; padding-top: 17px; }
  .app i { width: 8px; height: 5px; border-radius: 3px; background: #8b8272; margin-top: 6px; }
  .cur { width: 56px; height: 58px; margin: 8px 5px 0 4px; padding-top: 9px; background: #fdf4e6; border-radius: 6px; box-shadow: 0 1px 2px #0002; }
  .app i.on { width: 24px; background: #0a78d4; }
  .tray { display: flex; align-items: flex-start; width: 197px; margin-left: 143px; padding-top: 25px; }
  .tr { fill: none; stroke: #111; stroke-width: 1.6; }
  .tray svg:nth-child(1) { margin: 3px 26px 0 0; }
  .tray svg:nth-child(3) { margin-left: 23px; }
  .tray svg:nth-child(4) { margin: 1px 0 0 10px; }
  .tray svg:nth-child(5) { margin: 2px 0 0 13px; }
  .clock { margin-left: auto; margin-right: 21px; display: flex; flex-direction: column; align-items: flex-end; padding-top: 11px; line-height: 23.500px; letter-spacing: .2px; }
</style>
